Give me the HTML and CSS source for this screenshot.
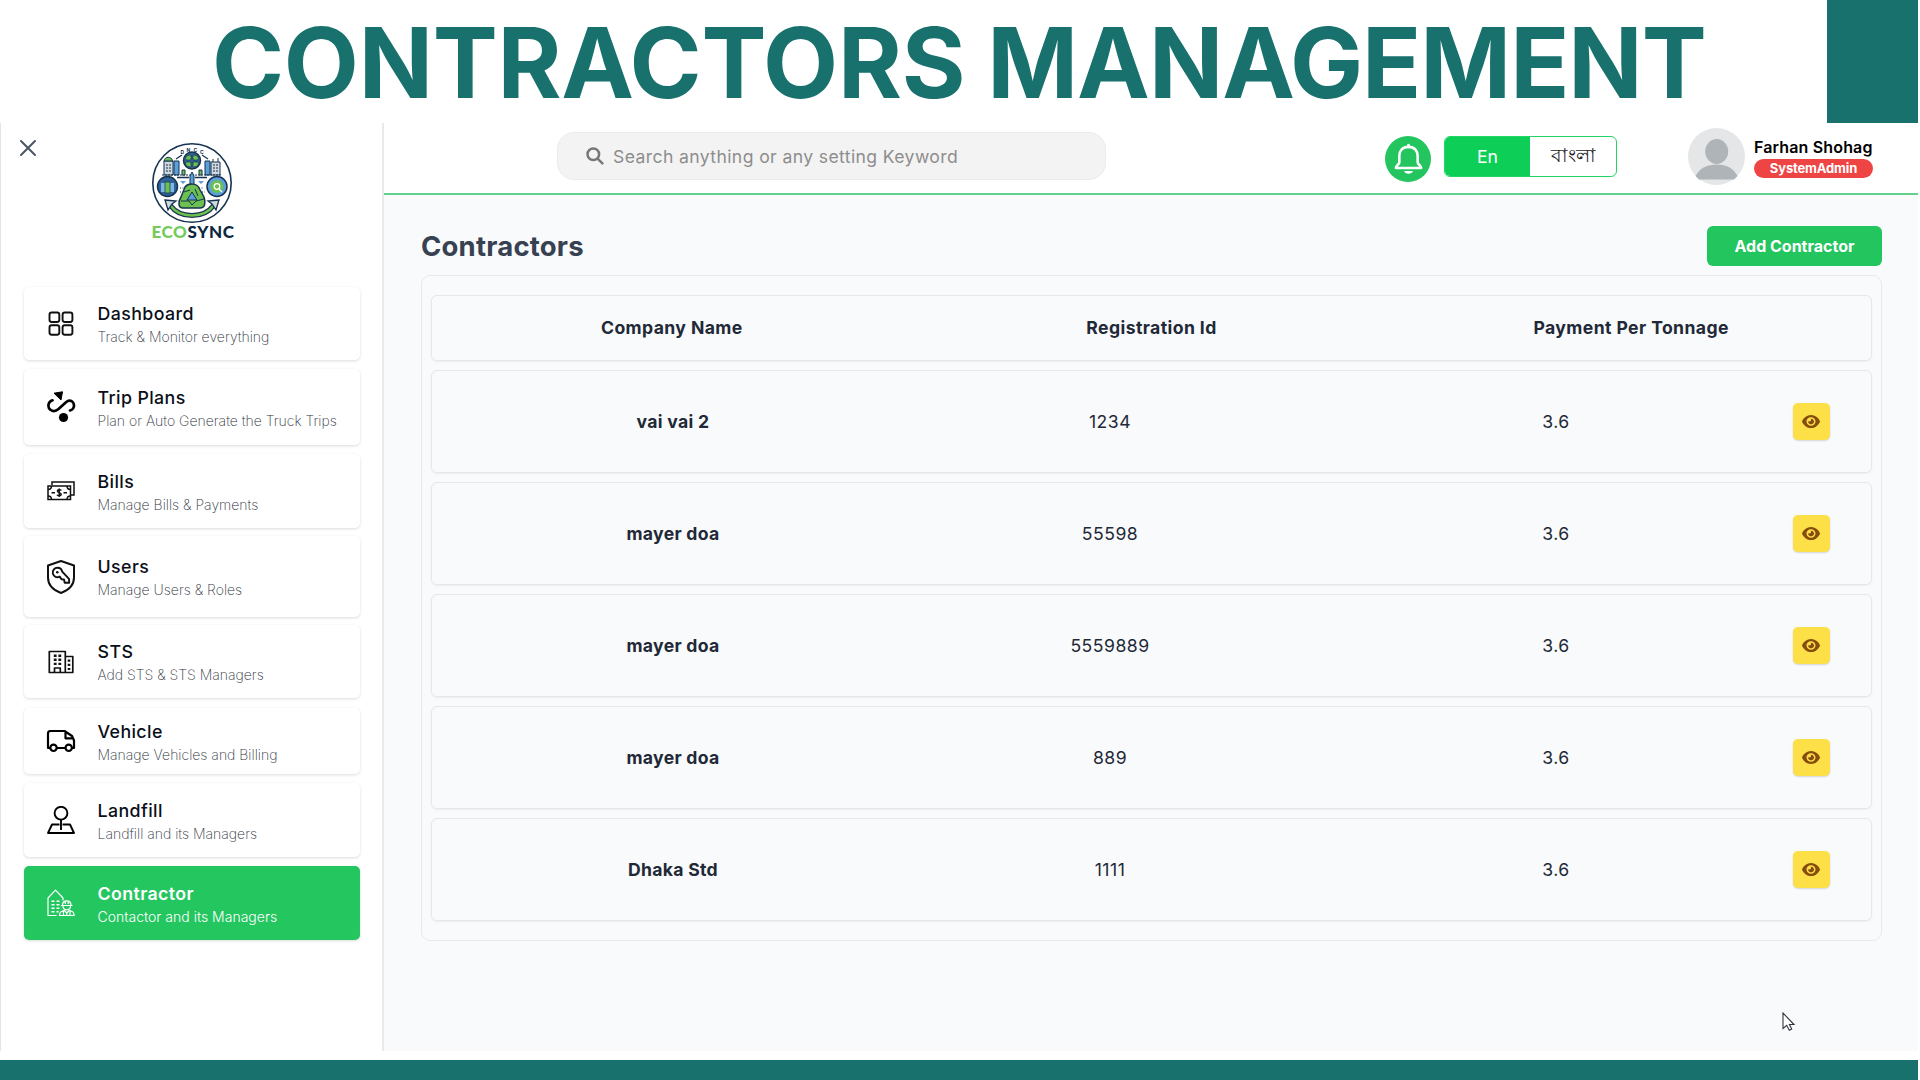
FILE: index.html
```html
<!DOCTYPE html>
<html lang="en">
<head>
<meta charset="utf-8">
<title>Contractors Management</title>
<link rel="stylesheet" href="styles.css">
</head>
<body>
<header class="banner">
  <h1 class="banner-title"><span class="banner-lead">CONTRACTORS</span> MANAGEMENT</h1>
  <div class="banner-block"></div>
</header>
<div class="app">
  <aside class="sidebar">
    <svg class="close" viewBox="0 0 18 18" fill="none" stroke="#4b5563" stroke-width="2" stroke-linecap="round"><path d="M2 2l14 14M16 2L2 16"/></svg>
    <div class="logo">
      <svg class="logo-mark" viewBox="0 0 82 82" fill="none">
        <circle cx="41" cy="41" r="39.2" fill="#fff" stroke="#17334f" stroke-width="1.6"/>
        <g fill="#17334f"><text x="29.5" y="12" class="logo-tiny">D</text><text x="35.5" y="9.800" class="logo-tiny">N</text><text x="42.500" y="9.800" class="logo-tiny">C</text><text x="49" y="12" class="logo-tiny">C</text></g>
        <path d="M25 17l6-4M51 13l6 4" stroke="#17334f" stroke-width="1.2"/>
        <g stroke="#17334f" stroke-width="1">
          <path d="M13 19h9v14h-9z" fill="#cfd8df"/><path d="M13 19c1-5 7-5 9 0z" fill="#6cc04f"/><path d="M23 19h5v14h-5z" fill="#5b9fdc"/>
          <path d="M54 19h5v14h-5z" fill="#5b9fdc"/><path d="M60 20h9v13h-9z" fill="#cfd8df"/><path d="M62 20v-3M67 20v-4"/>
          <path d="M15 23h5M15 26h5M15 29h5M62 23h5M62 26h5M62 29h5M11 33h60" stroke-dasharray="2 1"/>
          <path d="M31 28h3v5h-3zM48 28h3v5h-3z" fill="#6cc04f"/>
        </g>
        <circle cx="41" cy="18.500" r="8.500" fill="#2f6298" stroke="#17334f" stroke-width="1.500"/>
        <path d="M40 18v-5c-5 0-6 3-5 5zM42 18v-5c5 0 6 3 5 5zM40 20v5c-5 0-6-3-5-5zM42 20v5c5 0 6-3 5-5z" fill="#6cc04f" stroke="#17334f" stroke-width=".7"/>
        <path d="M26 35.500h12M44 35.500h12" stroke="#17334f" stroke-width="1.300"/>
        <path d="M29 39h6l-3 3zM47 39h6l-3 3z" fill="#5b9fdc"/>
        <path d="M29 46h5M29 50h3M48 46h5M51 50h3" stroke="#17334f" stroke-dasharray="1 1.500"/>
        <path d="M39 45V34l2-4 2 4v11z" fill="#5b9fdc" stroke="#17334f"/>
        <circle cx="16.500" cy="44.500" r="10" fill="#2f6298" stroke="#17334f" stroke-width="1.500"/>
        <path d="M10 41h4v9h-4zM19 41h4v9h-4z" fill="#7db7e6"/><path d="M14 40h5v11h-5z" fill="#6cc04f" stroke="#17334f" stroke-width=".7"/>
        <circle cx="66" cy="44.500" r="10" fill="#5b9fdc" stroke="#17334f" stroke-width="1.500"/>
        <circle cx="66" cy="44.500" r="6.500" fill="#6cc04f"/><circle cx="66" cy="44.500" r="2.800" stroke="#fff" stroke-width="1.300"/><path d="M68 47l3 3" stroke="#fff" stroke-width="1.200"/>
        <path d="M34 45c3-4 12-4 14 1l5 9c2 6 1 11-4 11H32c-5 0-5-6-2-11z" fill="#6cc04f" stroke="#17334f" stroke-width="1.500"/>
        <path d="M41 50l5 8H36z" fill="#5b9fdc" stroke="#17334f"/><path d="M33 50l6-2M30 59h8l3 4 4-4 8-2M44 47l3 7" stroke="#17334f"/>
        <path d="M19 63c10 14 34 14 44 0" stroke="#17334f" stroke-width="5"/><path d="M19 63c10 14 34 14 44 0" stroke="#6cc04f" stroke-width="2.600"/>
        <path d="M14 58l11 1-4 3-4 6zM68 58l-11 1 4 3 4 6z" fill="#cfd8df" stroke="#17334f" stroke-width="1.300"/>
      </svg>
      <div class="logo-text"><span class="logo-eco">ECO</span>SYNC</div>
    </div>
    <nav class="nav">
      <a class="nav-item h-dashboard"><svg class="nav-icon" viewBox="0 0 28 28" fill="none" stroke="#111" stroke-width="1.900"><rect x="2.500" y="2.500" width="9.800" height="9.500" rx="2.200"/><rect x="15.600" y="2.500" width="9.800" height="9.500" rx="2.200"/><rect x="2.500" y="15.200" width="9.800" height="9.500" rx="2.200"/><rect x="15.600" y="15.200" width="9.800" height="9.500" rx="2.200"/></svg><span class="nav-copy"><b class="nav-title">Dashboard</b><span class="nav-sub">Track &amp; Monitor everything</span></span></a>
      <a class="nav-item h-trip"><svg class="nav-icon tall" viewBox="0 0 28 32" fill="none"><path d="M5.500 9.300C.8 10.500.2 16.500 3.500 18.800c2.500 1.900 5.500 1.300 8-.8l7.500-6.800c2.300-2 5-2.200 6.700-.2 2.400 3 1.400 7.500-2.700 8.500" stroke="#000" stroke-width="2.700" stroke-linecap="round"/><path d="M7 2.200L15.500.8 14 9z" fill="#000" stroke="#000" stroke-linejoin="round"/><circle cx="16.500" cy="26.500" r="4.600" fill="#000"/></svg><span class="nav-copy"><b class="nav-title">Trip Plans</b><span class="nav-sub">Plan or Auto Generate the Truck Trips</span></span></a>
      <a class="nav-item h-bills"><svg class="nav-icon" viewBox="0 0 28 28" fill="none" stroke="#111" stroke-width="1.500"><path d="M5 8V5h22v13h-3"/><path d="M1 9h22.500v13.500H1z"/><path d="M1 12.500c2 0 3.500-1.500 3.500-3.500M20 9c0 2 1.500 3.500 3.500 3.500M1 19c2 0 3.500 1.500 3.500 3.500M20 22.500c0-2 1.500-3.500 3.500-3.500M4.500 15.800H8M16.500 15.800H20"/><path d="M14.300 13.500c-.5-1-3.700-1.200-3.900.6-.1 2 3.800 1.200 3.800 3.300-.2 1.900-3.600 1.700-4.200.4M12.200 11.500v8.500"/></svg><span class="nav-copy"><b class="nav-title">Bills</b><span class="nav-sub">Manage Bills &amp; Payments</span></span></a>
      <a class="nav-item h-users"><svg class="nav-icon taller" viewBox="0 0 28 34" fill="none" stroke="#111" stroke-width="2" stroke-linejoin="round"><path d="M14 1l13 4.500v12C27 25.500 21 30.500 14 33 7 30.500 1 25.500 1 17.500v-12z"/><path d="M10.500 7.800a4.700 4.700 0 1 0 2.200 8.800l1.800 2.700 2.500.2.700 3.200h4.500l-.2-3.800-6.800-7.200a4.700 4.700 0 0 0-4.700-3.900z" stroke-width="1.900"/><circle cx="10.300" cy="12.300" r="1.300" fill="#111" stroke="none"/></svg><span class="nav-copy"><b class="nav-title">Users</b><span class="nav-sub">Manage Users &amp; Roles</span></span></a>
      <a class="nav-item h-sts"><svg class="nav-icon" viewBox="0 0 28 28" fill="none" stroke="#111" stroke-width="1.700" stroke-linejoin="round"><path d="M2.300 3.500h16v21h-16zM18.300 8.500h7.500v16h-7.500M7.500 24.500V20h5.800v4.500"/><path d="M8.200 6.500v11M12.800 6.500v11" stroke-width="2.800" stroke-dasharray="2.400 1.700"/><path d="M22 11.500v11" stroke-width="2.600" stroke-dasharray="2.200 2"/></svg><span class="nav-copy"><b class="nav-title">STS</b><span class="nav-sub">Add STS &amp; STS Managers</span></span></a>
      <a class="nav-item h-vehicle"><svg class="nav-icon" viewBox="0 0 28 28" fill="none" stroke="#000" stroke-width="2.200" stroke-linejoin="round"><path d="M3 21H1V6.500Q1 4 3.500 4h14L25 9l2 4.500V21h-2M10 21h8.500"/><path d="M18.500 5.500v5.800h7"/><circle cx="6.500" cy="20.800" r="3.200"/><circle cx="21.700" cy="20.800" r="3.200"/></svg><span class="nav-copy"><b class="nav-title">Vehicle</b><span class="nav-sub">Manage Vehicles and Billing</span></span></a>
      <a class="nav-item h-landfill"><svg class="nav-icon" viewBox="0 0 28 28" fill="none" stroke="#000" stroke-width="1.900" stroke-linejoin="round"><circle cx="14" cy="7.200" r="6.400"/><path d="M14 13.600V24"/><path d="M12.500 18.500H5L1 27h26l-4-8.500h-7.500"/></svg><span class="nav-copy"><b class="nav-title">Landfill</b><span class="nav-sub">Landfill and its Managers</span></span></a>
      <a class="nav-item h-contractor active"><svg class="nav-icon" viewBox="0 0 28 28" fill="none" stroke="#fff" stroke-width="1.200" stroke-linejoin="round"><path d="M9.500 26.500H1V9L8.500 1.200 16 9v2.500"/><path d="M4.500 12.200h3M9.500 12.200h3M4.500 15.700h3M9.500 15.700h3M4.500 19.200h3M9.500 19.200h3M4.500 22.700h3M9.500 22.700h2" stroke-width="1.500"/><path d="M14 16.500h11.500M15.500 16.300c0-6 8.500-6 8.500 0M18.300 12v3M21.200 12v3M16 17c0 5 7.500 5 7.500 0M12.500 26.500c0-4 2-4.300 5-5l2.300 2.500 2.300-2.500c3 .7 5 1 5 5zM16.500 26v-3.500M23 26v-3.500M19.800 24v2.500"/></svg><span class="nav-copy"><b class="nav-title">Contractor</b><span class="nav-sub">Contactor and its Managers</span></span></a>
    </nav>
  </aside>
  <div class="content">
    <div class="topbar">
      <div class="search"><svg class="search-icon" viewBox="0 0 18 18" fill="none" stroke="#777" stroke-width="2.500" stroke-linecap="round"><circle cx="7.300" cy="7.300" r="5.800"/><path d="M11.800 11.800l4.600 4.600"/></svg><span class="search-text">Search anything or any setting Keyword</span></div>
      <div class="bell"><svg class="bell-icon" viewBox="0 0 30 32" fill="none" stroke="#fff" stroke-width="2.700" stroke-linejoin="round"><path d="M15 3.500c-6.500 0-9.500 4.300-9.500 9.500v6.500c0 2-3.500 3-3.500 5.800h26c0-2.800-3.500-3.800-3.500-5.800V13c0-5.200-3-9.500-9.500-9.500z"/><path d="M15 1.500v2" stroke-linecap="round"/><path d="M10.500 28.500h9c-.5 3.800-8.500 3.800-9 0z" fill="#fff" stroke="none"/></svg></div>
      <div class="lang"><span class="lang-on">En</span><span class="lang-off">বাংলা</span></div>
      <div class="user">
        <svg class="avatar" viewBox="0 0 57 57"><circle cx="28.500" cy="28.500" r="28.500" fill="#e4e6e7"/><g fill="#aeb4b7"><ellipse cx="28.700" cy="23.500" rx="11.500" ry="12.500"/><path d="M7.500 48C12 40 19 36.500 28.700 36.500S45 40 49.500 48L46 51.500H11z"/></g></svg>
        <div class="user-info"><span class="user-name">Farhan Shohag</span><span class="user-role">SystemAdmin</span></div>
      </div>
    </div>
    <main class="page">
      <svg class="defs" width="0" height="0"><symbol id="eye" viewBox="0 0 576 512"><path d="M288 32c-81 0-146 37-193 81C48 156 17 208 3 244c-3 8-3 17 0 25 14 35 45 87 92 131 47 43 112 80 193 80s146-37 193-81c47-43 78-95 93-130 3-8 3-17 0-25-15-36-46-88-93-131-47-44-112-81-193-81zM144 256a144 144 0 1 1 288 0 144 144 0 1 1-288 0zm144-64c0 35-29 64-64 64-7 0-14-1-20-3-6-2-12 1-12 7 0 7 1 14 3 21 14 51 67 82 118 68s82-67 68-118c-11-42-48-69-89-71-6 0-9 6-7 12 2 6 3 13 3 20z"/></symbol></svg>
      <div class="page-head"><h2 class="page-title">Contractors</h2><button class="add">Add Contractor</button></div>
      <section class="table">
        <div class="thead"><span>Company Name</span><span>Registration Id</span><span>Payment Per Tonnage</span></div>
        <div class="row"><b>vai vai 2</b><span>1234</span><span>3.6</span><i class="view"><svg class="eye" preserveAspectRatio="none" viewBox="0 32 576 448"><use href="#eye" width="576" height="512"/></svg></i></div>
        <div class="row"><b>mayer doa</b><span>55598</span><span>3.6</span><i class="view"><svg class="eye" preserveAspectRatio="none" viewBox="0 32 576 448"><use href="#eye" width="576" height="512"/></svg></i></div>
        <div class="row"><b>mayer doa</b><span>5559889</span><span>3.6</span><i class="view"><svg class="eye" preserveAspectRatio="none" viewBox="0 32 576 448"><use href="#eye" width="576" height="512"/></svg></i></div>
        <div class="row"><b>mayer doa</b><span>889</span><span>3.6</span><i class="view"><svg class="eye" preserveAspectRatio="none" viewBox="0 32 576 448"><use href="#eye" width="576" height="512"/></svg></i></div>
        <div class="row"><b>Dhaka Std</b><span>1111</span><span>3.6</span><i class="view"><svg class="eye" preserveAspectRatio="none" viewBox="0 32 576 448"><use href="#eye" width="576" height="512"/></svg></i></div>
      </section>
    </main>
  </div>
</div>
<footer class="footer"></footer>
<svg class="cursor" viewBox="0 0 14 20"><path d="M1 1v15.500l3.700-3.200 2.600 5 2.400-1.200-2.300-4.600H12z" fill="#fff" stroke="#333640" stroke-width="1.100"/></svg>
</body>
</html>
```
FILE: styles.css
```css
* { box-sizing: border-box; }
body {
  margin: 0;
  width: 1920px;
  height: 1080px;
  overflow: hidden;
  display: flex;
  flex-direction: column;
  background: #fff;
  font-family: Inter, "Liberation Sans", sans-serif;
  color: #1f2937;
}
.banner { height: 123px; flex: none; display: flex; justify-content: space-between; padding: 0 2px 0 212px; }
.banner-title { margin: 0; font-size: 97.5px; line-height: 127px; font-weight: 700; letter-spacing: -1px; color: #18716d; white-space: nowrap; }
.banner-lead { letter-spacing: -.3px; }
.banner-block { width: 91px; background: #18716d; }
.app { height: 928px; flex: none; display: flex; padding-right: 2px; }
.footer { height: 20px; margin: 9px 2px 0 0; background: #18716d; }

.sidebar { width: 384px; flex: none; border-left: 1px solid #e2e4e8; border-right: 2px solid #e8eaed; padding: 15px 22px 0 23px; display: flex; flex-direction: column; background: #fff; }
.close { width: 18px; height: 18px; margin-left: -5px; margin-top: 1px; }
.logo { width: 90px; height: 106px; margin: -16px auto 0 123px; display: flex; flex-direction: column; align-items: center; padding-top: 1px; }
.logo-mark { width: 82px; height: 82px; flex: none; margin-left: -1px; }
.logo-tiny { font: 700 5px Inter, sans-serif; }
.logo-text { font: 900 17px/17px Lato, sans-serif; letter-spacing: .6px; color: #0c2740; margin: -1px 0 0 2px; }
.logo-eco { color: #74cb5c; }
.nav { margin-top: 40px; display: flex; flex-direction: column; }
.nav-item { display: flex; align-items: center; padding-left: 22px; border-radius: 5px; background: #fff; box-shadow: 0 1px 3px rgba(0,0,0,.14); margin-bottom: 9px; }
.h-dashboard, .h-sts { height: 73px; }
.h-trip { height: 76px; }
.h-bills, .h-landfill, .h-contractor { height: 74px; }
.h-bills, .h-users { margin-bottom: 8px; }
.h-users { height: 81px; }
.h-sts { margin-bottom: 10px; }
.h-vehicle { height: 66px; }
.nav-icon { width: 30px; height: 28px; flex: none; }
.nav-icon.tall { height: 32px; }
.nav-icon.taller { height: 34px; }
.nav-copy { margin-left: 21.5px; padding-top: 3px; display: flex; flex-direction: column; white-space: nowrap; }
.nav-title { font-size: 17.8px; line-height: 24px; font-weight: 500; letter-spacing: .4px; color: #0b0f19; }
.nav-sub { font-size: 14px; line-height: 22px; font-weight: 250; color: #2f3440; }
.active { background: #24c660; }
.active .nav-title { color: #fff; font-weight: 600; }
.active .nav-sub { color: #fff; font-weight: 300; }

.content { flex: 1; background: #f9fafc; }
.topbar { height: 72px; background: #fff; border-bottom: 2px solid #63d18c; display: flex; padding-left: 173px; }
.search { width: 549px; height: 48px; margin-top: 9px; background: #f3f3f3; border: 1px solid #ececec; border-radius: 17px; display: flex; align-items: center; padding-left: 28px; }
.search-icon { width: 18px; height: 18px; }
.search-text { margin-left: 9px; font-size: 17.6px; letter-spacing: .38px; color: #8d8d8d; white-space: nowrap; }
.bell { width: 46px; height: 46px; border-radius: 50%; background: #22c55e; margin: 13px 0 0 279px; display: flex; align-items: center; justify-content: center; }
.bell-icon { width: 29px; height: 32px; }
.lang { width: 173px; height: 41px; margin: 13px 0 0 13px; border: 1px solid #22d665; border-radius: 6px; overflow: hidden; display: flex; font-size: 17.6px; line-height: 39px; text-align: center; }
.lang-on { width: 85px; background: #0dcf57; color: #fff; }
.lang-off { flex: 1; font-size: 18.8px; line-height: 37px; color: #222; }
.user { display: flex; margin-left: 71px; padding-top: 5px; }
.avatar { width: 57px; height: 57px; }
.user-info { width: 119px; margin: 9px 0 0 9px; display: flex; flex-direction: column; }
.user-name { font-size: 16px; line-height: 20px; font-weight: 600; letter-spacing: .15px; color: #000; white-space: nowrap; }
.user-role { margin-top: 2px; height: 19px; border-radius: 10px; background: #ef4444; color: #fff; font-size: 13px; line-height: 18px; font-weight: 700; letter-spacing: -.15px; text-align: center; }

.page { padding: 31px 36px 0 37px; }
.defs { display: block; }
.page-head { height: 40px; display: flex; justify-content: space-between; align-items: center; }
.page-title { margin: 0; font-size: 27.5px; font-weight: 650; letter-spacing: .2px; color: #374151; }
.add { width: 175px; height: 40px; border: 0; border-radius: 6px; background: #22c55e; color: #fff; font: 700 16px Inter, sans-serif; }
.table { height: 666px; margin-top: 9px; padding: 19px 9px; border: 1px solid #e7e9ec; border-radius: 9px; display: flex; flex-direction: column; }
.thead, .row { border: 1px solid #e5e7eb; border-radius: 6px; box-shadow: 0 1px 2px rgba(0,0,0,.05); display: grid; align-items: center; text-align: center; font-size: 17.6px; letter-spacing: .5px; }
.thead { height: 66px; grid-template-columns: repeat(3, 1fr); font-weight: 650; letter-spacing: .4px; }
.row { height: 103.500px; margin-top: 8.900px; grid-template-columns: 444px 430px 462px 48px; padding: 0 35px 0 19px; }
.row b { font-weight: 650; letter-spacing: .3px; }
.view { width: 37px; height: 37px; justify-self: center; border-radius: 5px; background: #fde047; display: flex; align-items: center; justify-content: center; box-shadow: 0 1px 2px rgba(0,0,0,.15); }
.eye { width: 18px; height: 13px; fill: #854d0e; }
.cursor { position: absolute; left: 1782px; top: 1012px; width: 14px; height: 20px; }
```
